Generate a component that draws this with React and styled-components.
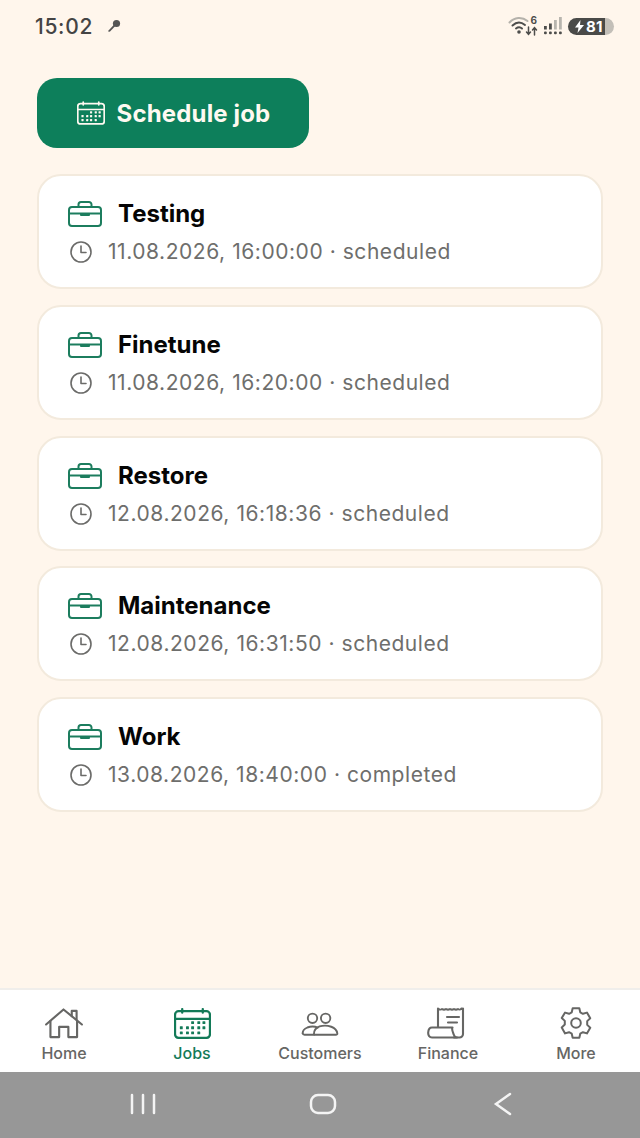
import React from "react";
import styled, { createGlobalStyle } from "styled-components";

const Global = createGlobalStyle`
  html, body { margin: 0; padding: 0; background: #fff6ec; }
  * { box-sizing: border-box; }
`;
const Page = styled.div`
  width: 640px; height: 1138px; display: flex; flex-direction: column;
  background: #fff6ec; font-family: Inter, "Liberation Sans", sans-serif; overflow: hidden;
`;
const StatusBar = styled.div`
  height: 52px; padding: 0 26px 0 35px; display: flex; align-items: center; justify-content: space-between;
  color: #444;
`;
const Time = styled.span`
  font-size: 21px; font-weight: 500; letter-spacing: .7px; margin-right: 14px;
`;
const Left = styled.div`display: flex; align-items: center;`;
const Right = styled.div`display: flex; align-items: center; gap: 5px;`;
const Battery = styled.div`
  width: 46px; height: 17px; border-radius: 9px; display: flex; align-items: center; justify-content: flex-start; gap: 2px;
  padding-left: 7px; font-size: 15px; font-weight: 700; color: #fff; letter-spacing: .2px;
  background: linear-gradient(90deg, #4a4a48 0 81%, #c3bfb8 81% 100%);
`;
const Main = styled.main`
  flex: 1; padding: 26px 37px 0; display: flex; flex-direction: column; align-items: flex-start;
`;
const PrimaryButton = styled.button`
  width: 272px; height: 70px; border: 0; border-radius: 20px; background: #0d7f5b; color: #fef9f1;
  display: flex; align-items: center; justify-content: center; gap: 12px;
  font-family: inherit; font-size: 24px; font-weight: 700; letter-spacing: .15px; padding: 0 0 0 1px; margin-bottom: 26px;
`;
const List = styled.div`display: flex; flex-direction: column; gap: 15.75px; width: 566px;`;
const Card = styled.article`
  height: 115px; background: #fff; border: 2px solid #f3eadd; border-radius: 24px;
  padding: 22px 0 0 29px; display: flex; flex-direction: column; gap: 8px;
`;
const Row = styled.div`display: flex; align-items: center;`;
const Title = styled.h3`
  margin: 0 0 0 16px; font-size: 24px; line-height: 32px; font-weight: 700; color: #050505;
`;
const Meta = styled.span`
  margin-left: 16px; font-size: 21px; line-height: 28px; color: #6e6e6c; letter-spacing: .55px; white-space: nowrap;
`;
const MetaRow = styled(Row)`padding-left: 2px;`;
const Nav = styled.nav`
  height: 84px; background: #fff; border-top: 2px solid #f0eeeb; display: grid; grid-template-columns: repeat(5, 1fr);
  padding: 0;
`;
const NavItem = styled.div`
  display: flex; flex-direction: column; align-items: center; padding-top: 17px;
  color: ${p => (p.$active ? "#137a58" : "#666664")};
  font-size: 16px; font-weight: 500; line-height: 18px;
`;
const NavIcon = styled.div`
  height: 32px; margin-bottom: 5px; display: flex; align-items: center; justify-content: center;
`;
const SystemBar = styled.div`
  height: 66px; background: #979797; display: flex; align-items: center; justify-content: center;
  padding: 0 0 2px 6px; gap: 0;
`;
const SysSlot = styled.div`width: 180px; display: flex; justify-content: center; color: #f4f4f4;`;

const CalendarIcon = ({ color = "currentColor", w = 36, h = 30 }) => (
  <svg width={w} height={h} viewBox="0 0 36 30" fill="none" stroke={color} strokeWidth="2.200" strokeLinecap="round">
    <rect x="1" y="3" width="34" height="26" rx="3.500" />
    <path d="M1.500 10.500h33M8 1v3.500M28 1v3.500" />
    <g fill={color} stroke="none">
      {[[18,14],[24,14],[29,14],[7,19],[13,19],[18,19],[24,19],[29,19],[7,24],[13,24],[18,24],[24,24]].map(([x, y]) => (
        <rect key={x + "-" + y} x={x - 1.300} y={y - 1.300} width="2.800" height="2.800" rx=".5" />
      ))}
    </g>
  </svg>
);
const Briefcase = () => (
  <svg width="34" height="26" viewBox="0 0 34 26" fill="none" stroke="#1c7d5e" strokeWidth="2" strokeLinejoin="round">
    <rect x="1" y="6" width="32" height="19" rx="3" />
    <path d="M10.500 6V3.500A2.500 2.500 0 0 1 13 1h8a2.500 2.500 0 0 1 2.500 2.500V6" />
    <path d="M1 12.500h32" />
    <rect x="12" y="12.500" width="10" height="2.600" fill="#1c7d5e" stroke="none" rx="1" />
  </svg>
);
const Clock = () => (
  <svg width="22" height="22" viewBox="0 0 22 22" fill="none" stroke="#6b6b69" strokeWidth="1.600" strokeLinecap="round" strokeLinejoin="round">
    <circle cx="11" cy="11" r="10" />
    <path d="M11 5v6.500h5" />
  </svg>
);
const Key = () => (
  <svg width="14" height="14" viewBox="0 0 14 14" fill="#555">
    <circle cx="9.500" cy="4.500" r="3.600" />
    <path d="M7.400 5.200 8.800 6.600 3 12.400l-1.600.6.400-1.800z" />
  </svg>
);
const Wifi = () => (
  <svg width="30" height="22" viewBox="0 0 30 22" fill="none" strokeLinecap="round">
    <path d="M1.500 7.500C6.500 2 14 1.500 19.500 6" stroke="#b5b2ab" strokeWidth="2" />
    <path d="M4.500 10.500c4-3.700 8.500-3.700 12.500-.5" stroke="#4d4d4b" strokeWidth="2" />
    <path d="M8 13.500c2-1.500 4.300-1.500 6 0" stroke="#4d4d4b" strokeWidth="2" />
    <circle cx="11" cy="17" r="1.800" fill="#4d4d4b" />
    <path d="M20.500 12v7M18.500 17l2 2.300 2-2.300M26.500 20v-7M24.500 15l2-2.300 2 2.300" stroke="#4d4d4b" strokeWidth="1.500" />
    <text x="22.500" y="9" fontSize="10" fontWeight="700" fontFamily="Inter, sans-serif" fill="#4d4d4b">6</text>
  </svg>
);
const Signal = () => (
  <svg width="20" height="20" viewBox="0 0 20 20" fill="#4d4d4b">
    {[1, 6, 11, 16].map(x => <rect key={x} x={x} y="15.500" width="2.800" height="2.800" rx="1" />)}
    <rect x="1" y="10" width="2.800" height="3.500" />
    <rect x="6" y="7.500" width="2.800" height="6" />
    <rect x="11" y="4" width="2.800" height="9.500" fill="#b8b5ae" />
    <rect x="16" y="1" width="2.800" height="12.500" fill="#b8b5ae" />
  </svg>
);
const Bolt = () => (
  <svg width="9" height="13" viewBox="0 0 9 13" fill="#fff"><path d="M5.500 0 0 7.500h3.500L2.500 13 9 5H5z" /></svg>
);
const Home = () => (
  <svg width="40" height="31" viewBox="0 0 40 32" fill="none" stroke="#666664" strokeWidth="2.200" strokeLinejoin="round" strokeLinecap="round">
    <path d="M1.500 17 19.500 1.500 38.500 17" />
    <path d="M28 8.500V3h5v9" />
    <path d="M6 13.500V30h9V19.500h9.500V30h9V13.500" />
  </svg>
);
const People = () => (
  <svg width="40" height="30" viewBox="0 0 40 32" fill="none" stroke="#666664" strokeWidth="2" strokeLinecap="round" strokeLinejoin="round">
    <circle cx="12" cy="11" r="5" />
    <circle cx="26" cy="11" r="5" />
    <path d="M1.500 27c0-3 2-5 5-6.200 3.500-1.300 8-1.300 11 .2" />
    <path d="M1.500 27c.2 1 1 1.500 2 1.500H14" />
    <path d="M13.500 28c0-4 2.500-7 6-8.300 4-1.300 9-1 12.500.3 4 1.500 6 4 6.500 7 .2 1-.5 1.500-1.500 1.500H15c-1 0-1.500-.2-1.500-.5z" />
  </svg>
);
const Receipt = () => (
  <svg width="42" height="32" viewBox="0 0 42 32" fill="none" stroke="#666664" strokeWidth="2.100" strokeLinecap="round" strokeLinejoin="round">
    <path d="M11 20V1.500c2 1.500 2.500 1.500 4 .5 1.500 1 2.500 1 4 0 1.500 1 2.500 1 4 0 1.500 1 2.500 1 4 0 1.500 1 2.500 1 4 0 1.500 1 2 1 3.500-.5 1 .5.500.5 1.500 0V27a3.500 3.500 0 0 1-3.500 3.500H27" />
    <path d="M20 10h12M21 15.500h9" />
    <path d="M5 20.500h20.500c0 0-1 1 .5 5 .8 3 2 5 4 5H5c-2.500 0-4-2-3.800-5 .2-3 1.800-5 3.800-5z" />
  </svg>
);
const Gear = () => (
  <svg width="40" height="32" viewBox="0 0 24 24" fill="none" stroke="#666664" strokeWidth="1.500" strokeLinecap="round" strokeLinejoin="round">
    <path d="M9.500 1h5l.7 3 2 1.100 3-.9 2.500 4.300-2.300 2.100v2.800l2.300 2.100-2.500 4.300-3-.9-2 1.100-.7 3h-5l-.7-3-2-1.100-3 .9L1.300 15.300 3.600 13.200v-2.800L1.300 8.300l2.500-4.100 3 .9 2-1.100z" />
    <circle cx="12" cy="12" r="3.600" />
  </svg>
);

const jobs = [
  ["Testing", "11.08.2026, 16:00:00 · scheduled"],
  ["Finetune", "11.08.2026, 16:20:00 · scheduled"],
  ["Restore", "12.08.2026, 16:18:36 · scheduled"],
  ["Maintenance", "12.08.2026, 16:31:50 · scheduled"],
  ["Work", "13.08.2026, 18:40:00 · completed"],
];

export default function App() {
  return (
    <Page>
      <Global />
      <StatusBar>
        <Left><Time>15:02</Time><Key /></Left>
        <Right><Wifi /><Signal /><Battery><Bolt />81</Battery></Right>
      </StatusBar>
      <Main>
        <PrimaryButton><CalendarIcon color="#fef9f1" w={28} h={24} />Schedule job</PrimaryButton>
        <List>
          {jobs.map(([title, meta]) => (
            <Card key={title}>
              <Row><Briefcase /><Title>{title}</Title></Row>
              <MetaRow><Clock /><Meta>{meta}</Meta></MetaRow>
            </Card>
          ))}
        </List>
      </Main>
      <Nav>
        <NavItem><NavIcon><Home /></NavIcon>Home</NavItem>
        <NavItem $active><NavIcon><CalendarIcon color="#137a58" w={37} h={31} /></NavIcon>Jobs</NavItem>
        <NavItem><NavIcon><People /></NavIcon>Customers</NavItem>
        <NavItem><NavIcon><Receipt /></NavIcon>Finance</NavItem>
        <NavItem><NavIcon><Gear /></NavIcon>More</NavItem>
      </Nav>
      <SystemBar>
        <SysSlot>
          <svg width="28" height="22" viewBox="0 0 28 22" stroke="currentColor" strokeWidth="2.500" strokeLinecap="round"><path d="M3 2v18M14 2v18M25 2v18" /></svg>
        </SysSlot>
        <SysSlot>
          <svg width="28" height="22" viewBox="0 0 28 22" fill="none" stroke="currentColor" strokeWidth="2.500"><rect x="2" y="2" width="24" height="18" rx="7" /></svg>
        </SysSlot>
        <SysSlot>
          <svg width="20" height="24" viewBox="0 0 20 24" fill="none" stroke="currentColor" strokeWidth="2.500" strokeLinecap="round"><path d="M17 2 3 12l14 10" /></svg>
        </SysSlot>
      </SystemBar>
    </Page>
  );
}
